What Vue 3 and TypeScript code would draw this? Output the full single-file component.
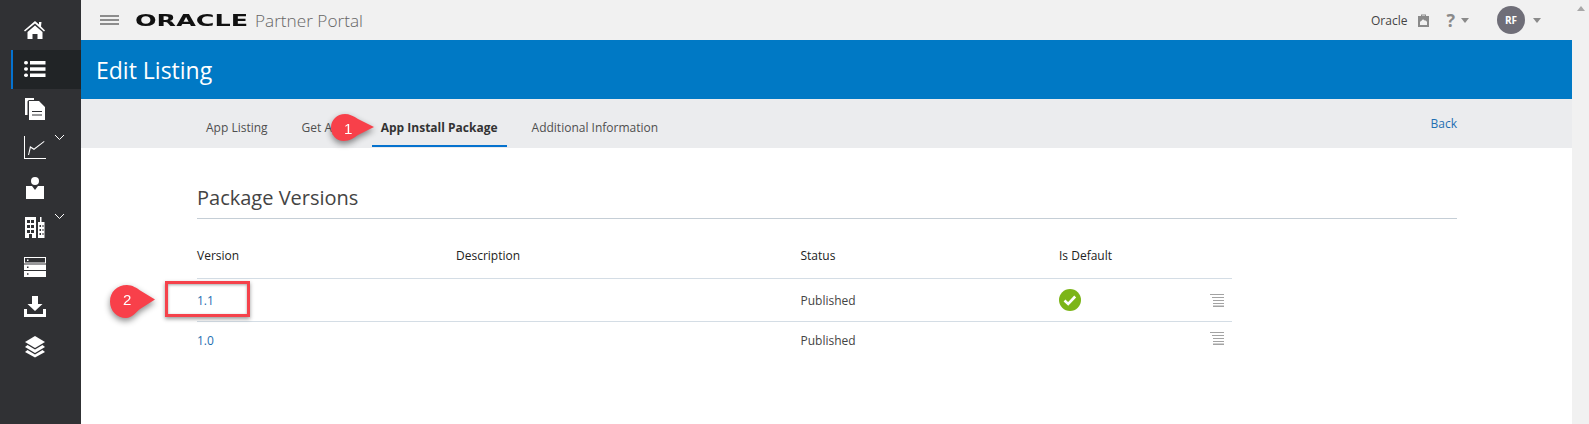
<template>
  <div class="page">
    <aside class="sidebar">
      <div v-for="item in navItems" :key="item.name" class="nav-item" :class="{ active: item.active }">
        <svg class="nav-icon" width="24" height="24" viewBox="0 0 24 24" fill="#fff" v-html="item.svg"></svg>
        <svg v-if="item.sub" class="nav-chevron" width="11" height="7" viewBox="0 0 11 7"><path d="M1 1l4.500 4.500L10 1" fill="none" stroke="#fff" stroke-width="1"/></svg>
      </div>
    </aside>

    <main class="main">
      <header class="topbar">
        <div class="burger"><span></span><span></span><span></span></div>
        <span class="logo"><span class="logo-text">ORACLE</span></span>
        <span class="portal">Partner Portal</span>
        <div class="top-right">
          <span class="org">Oracle</span>
          <svg class="bag" width="11" height="14" viewBox="0 0 11 14"><path d="M3 3V1.500h5V3h3v11H0V3zm1 0h3V2.500H4zM2 9v3h7V9c-1-2-2-1.500-2.500-1.500C6 6 4 6 3.500 8 3 8 2.500 8 2 9z" fill="#8a8a8a" fill-rule="evenodd"/></svg>
          <span class="help">?</span>
          <span class="caret"></span>
          <span class="avatar">RF</span>
          <span class="caret"></span>
        </div>
      </header>

      <div class="title-bar"><h1>Edit Listing</h1></div>

      <nav class="tabs">
        <a v-for="tab in tabs" :key="tab" class="tab" :class="{ selected: tab === 'App Install Package' }">{{ tab }}</a>
        <a class="back">Back</a>
      </nav>

      <section class="content">
        <h2>Package Versions</h2>
        <div class="grid">
          <div class="row head">
            <span>Version</span><span>Description</span><span>Status</span><span>Is Default</span><span></span>
          </div>
          <div v-for="pkg in packages" :key="pkg.version" class="row">
            <a class="ver">{{ pkg.version }}</a>
            <span></span>
            <span class="status">{{ pkg.status }}</span>
            <span>
              <svg v-if="pkg.isDefault" class="check" width="22" height="22" viewBox="0 0 22 22">
                <circle cx="11" cy="11" r="11" fill="#7cb518"/>
                <path d="M5.500 11.500l3.700 3.500 7-7.500" fill="none" stroke="#fff" stroke-width="2.600"/>
              </svg>
            </span>
            <svg class="row-menu" width="14" height="13" viewBox="0 0 14 13" fill="#a3a3a3">
              <rect width="14" height="1"/><rect x="2" y="3" width="12" height="1"/><rect x="3" y="6" width="11" height="1"/><rect x="3" y="9" width="11" height="1"/><rect x="3" y="11.500" width="11" height="1.500"/>
            </svg>
          </div>
        </div>
      </section>
    </main>

    <div class="scrollbar"><span class="scroll-up"></span></div>

    <!-- annotations painted on top of the screenshot -->
    <div class="callout one">
      <svg width="50" height="36" viewBox="0 0 50 36"><path d="M17 3C21 3 26 5 30 8L46 16 30 24C26 27 21 30 16 30 8 30 3 24 3 16.500 3 9 9 3 17 3z" fill="#f8404a"/></svg>
      <span>1</span>
    </div>
    <div class="callout two">
      <svg width="52" height="40" viewBox="0 0 52 40"><path d="M20 3C25 3 30 6 34 9L48 17.500 33 27C29 30 25 36 19 36 10 36 3 29 3 19.500 3 10 10 3 20 3z" fill="#f8404a"/></svg>
      <span>2</span>
    </div>
    <div class="mark"></div>
  </div>
</template>

<script setup lang="ts">
interface NavItem {
  name: string
  svg: string
  active?: boolean
  sub?: boolean
}

const navItems: NavItem[] = [
  { name: 'home', svg: '<path d="M12 3l4 3.500V4h2.500l-.5 4.500 4 4-1 1L12 5.500 2 13.500l-1-1z"/><path d="M12 7.500l7.500 6.500v7H14.500v-5h-5v5H4.500v-7z"/>' },
  { name: 'list', active: true, svg: '<rect x="1" y="4" width="4" height="3.500" rx="1.700"/><rect x="1" y="10.300" width="4" height="3.500" rx="1.700"/><rect x="1" y="16.500" width="4" height="3.500" rx="1.700"/><rect x="7" y="4" width="15.500" height="3.500"/><rect x="7" y="10.300" width="15.500" height="3.500"/><rect x="7" y="16.500" width="15.500" height="3.500"/>' },
  { name: 'docs', svg: '<path d="M2 1h9v2H6.500C5 3 4.500 4 4.500 5v13H2z"/><path d="M6 4h10l6 6v13H6zm3 10v1h10v-1zm0 3.500v1h10v-1z" fill-rule="evenodd"/>' },
  { name: 'chart', sub: true, svg: '<path d="M1 0h1v22h21v1H1z"/><path d="M5 19l2-9 4 2.500L21 5l.500.800L11 14 7.800 12 6 19z"/>' },
  { name: 'user', svg: '<circle cx="12" cy="5" r="4"/><path d="M3 10h6l3 4 3-4h6v13H3z"/>' },
  { name: 'building', sub: true, svg: '<path fill-rule="evenodd" d="M2 2h11v21H9v-4H6v4H2zm2 3v3h3V5zm4 0v3h3V5zM4 10v3h3v-3zm4 0v3h3v-3zM4 15v3h3v-3zm4 0v3h3v-3z"/><path fill-rule="evenodd" d="M15 7h2V2h1.500v5H21.500v16H15zm1.500 3v2h1.500v-2zm3 0v2h1v-2zm-3 4v2h1.500v-2zm3 0v2h1v-2zm-3 4v2h1.500v-2zm3 0v2h1v-2z"/>' },
  { name: 'server', svg: '<path fill-rule="evenodd" d="M1 2h22v6.500H1zm1 1v4.500h20V3zM4 4.500h1.500V6H4z"/><path fill-rule="evenodd" d="M1 9.500h22v5.500H1zm3 2V13h1.500v-1.500z"/><path fill-rule="evenodd" d="M1 16h22v6H1zm3 2.200v1.500h1.500v-1.500z"/>' },
  { name: 'download', svg: '<path d="M9 2h6v8h4.500L12 17 4.500 10H9z"/><path d="M1 15h3v5h16v-5h3v8H1z"/>' },
  { name: 'layers', svg: '<path d="M12 2l10 6-10 6L2 8z"/><path d="M4.500 11L12 15.500 19.500 11l2.500 2-10 6-10-6z"/><path d="M4.500 16L12 20.500 19.500 16l2.500 2-10 5.500L2 18z"/>' }
]

const tabs: string[] = ['App Listing', 'Get App', 'App Install Package', 'Additional Information']

const packages = [
  { version: '1.1', status: 'Published', isDefault: true },
  { version: '1.0', status: 'Published', isDefault: false }
]
</script>

<style>
html,
body {
  margin: 0;
  background: #fff;
  overflow: hidden;
}
</style>

<style scoped>
.page {
  position: relative;
  display: flex;
  width: 1589px;
  height: 424px;
  overflow: hidden;
  font-family: "Open Sans", "Noto Sans", sans-serif;
  color: #333;
}

.sidebar {
  width: 81px;
  flex: none;
  padding-top: 10px;
  box-sizing: border-box;
  background: #303134;
}

.nav-item {
  position: relative;
  display: flex;
  align-items: center;
  justify-content: center;
  height: 39.500px;
  margin-left: 11px;
  padding-right: 24px;
  border-left: 2px solid transparent;
}

.nav-item.active {
  background: #212426;
  border-left-color: #0572ce;
}

.nav-chevron {
  position: absolute;
  left: 41px;
  top: 5px;
}

.main {
  flex: 1;
  min-width: 0;
  display: flex;
  flex-direction: column;
}

.topbar {
  display: flex;
  align-items: center;
  height: 40px;
  flex: none;
  padding-left: 19px;
  background: #f1f1f1;
}

.burger {
  display: flex;
  flex-direction: column;
  gap: 2.500px;
  width: 19px;
}

.burger span {
  height: 1.500px;
  background: #8d8d8d;
}

.logo {
  display: block;
  width: 110px;
  margin-left: 16px;
}

.logo-text {
  display: inline-block;
  font-family: "DejaVu Sans", sans-serif;
  font-size: 16.500px;
  font-weight: 700;
  color: #111;
  transform: scaleX(1.54);
  transform-origin: left center;
}

.portal {
  margin-left: 10px;
  font-size: 17.200px;
  font-weight: 300;
  color: #666;
}

.top-right {
  display: flex;
  align-items: center;
  margin-left: auto;
  padding-right: 31px;
}

.org {
  font-size: 12px;
  color: #444;
}

.bag {
  margin-left: 11px;
}

.help {
  margin-left: 17px;
  font-size: 18px;
  font-weight: 700;
  color: #8a8a8a;
}

.caret {
  width: 0;
  height: 0;
  margin-left: 6px;
  border-left: 4px solid transparent;
  border-right: 4px solid transparent;
  border-top: 5px solid #8a8a8a;
}

.avatar {
  display: flex;
  align-items: center;
  justify-content: center;
  width: 28px;
  height: 28px;
  margin: 0 2px 0 28px;
  border-radius: 50%;
  background: #6f6e78;
  color: #fff;
  font-size: 10px;
  font-weight: 700;
}

.title-bar {
  display: flex;
  align-items: center;
  height: 59px;
  flex: none;
  padding-left: 15px;
  background: #0079c5;
}

.title-bar h1 {
  margin: 0;
  font-size: 23px;
  font-weight: 400;
  color: #fff;
}

.tabs {
  display: flex;
  align-items: stretch;
  height: 49px;
  flex: none;
  padding-left: 116px;
  padding-right: 115px;
  box-sizing: border-box;
  background: #ebecee;
  font-size: 12px;
}

.tab {
  display: flex;
  align-items: center;
  height: 48px;
  padding: 10px 9px 0;
  margin-right: 16px;
  box-sizing: border-box;
  border-bottom: 2px solid transparent;
  color: #4f4f4f;
}

.tab.selected {
  margin-right: 16px;
  font-weight: 700;
  color: #333;
  border-bottom-color: #0572ce;
}

.back {
  display: flex;
  align-items: center;
  height: 49px;
  margin-left: auto;
  padding-bottom: 1px;
  box-sizing: border-box;
  color: #1f6fb2;
}

.content {
  padding: 0 115px 0 116px;
}

.content h2 {
  margin: 0;
  padding: 36px 0 6px;
  border-bottom: 1px solid #c5ced6;
  font-size: 20px;
  line-height: 28px;
  font-weight: 400;
  color: #444;
}

.grid {
  width: 1035px;
}

.row {
  display: grid;
  grid-template-columns: 259px 344.500px 258.500px 1fr 14px;
  align-items: center;
  height: 37px;
  padding-right: 8px;
  font-size: 12px;
  color: #444;
}

.row + .row {
  border-top: 1px solid #d4dde5;
}

.row:nth-child(2) {
  height: 42px;
}

.row.head {
  height: 59px;
  padding-top: 14px;
  box-sizing: border-box;
  color: #222;
}

.ver {
  color: #1f6fb2;
}

.check {
  display: block;
}

.row:last-child .row-menu {
  margin-top: -4px;
}

.scrollbar {
  position: relative;
  width: 17px;
  flex: none;
  background: #f1f1f1;
}

.scroll-up {
  position: absolute;
  left: 5px;
  top: 6px;
  width: 0;
  height: 0;
  border-left: 4px solid transparent;
  border-right: 4px solid transparent;
  border-bottom: 5px solid #a8a8a8;
}

.callout {
  position: absolute;
  filter: drop-shadow(0 3px 3px rgba(0, 0, 0, 0.45));
}

.callout svg {
  display: block;
}

.callout span {
  position: absolute;
  color: #fff;
  font-family: "Liberation Sans", sans-serif;
  font-size: 15px;
}

.callout.one {
  left: 328px;
  top: 111px;
}

.callout.one span {
  left: 16px;
  top: 9px;
}

.callout.two {
  left: 107px;
  top: 282px;
}

.callout.two span {
  left: 16px;
  top: 9px;
}

.mark {
  position: absolute;
  left: 165px;
  top: 281px;
  width: 85px;
  height: 36px;
  box-sizing: border-box;
  border: 3px solid #f5424b;
  box-shadow: 0 2px 4px rgba(0, 0, 0, 0.4), inset 0 1px 3px rgba(0, 0, 0, 0.35);
}
</style>
